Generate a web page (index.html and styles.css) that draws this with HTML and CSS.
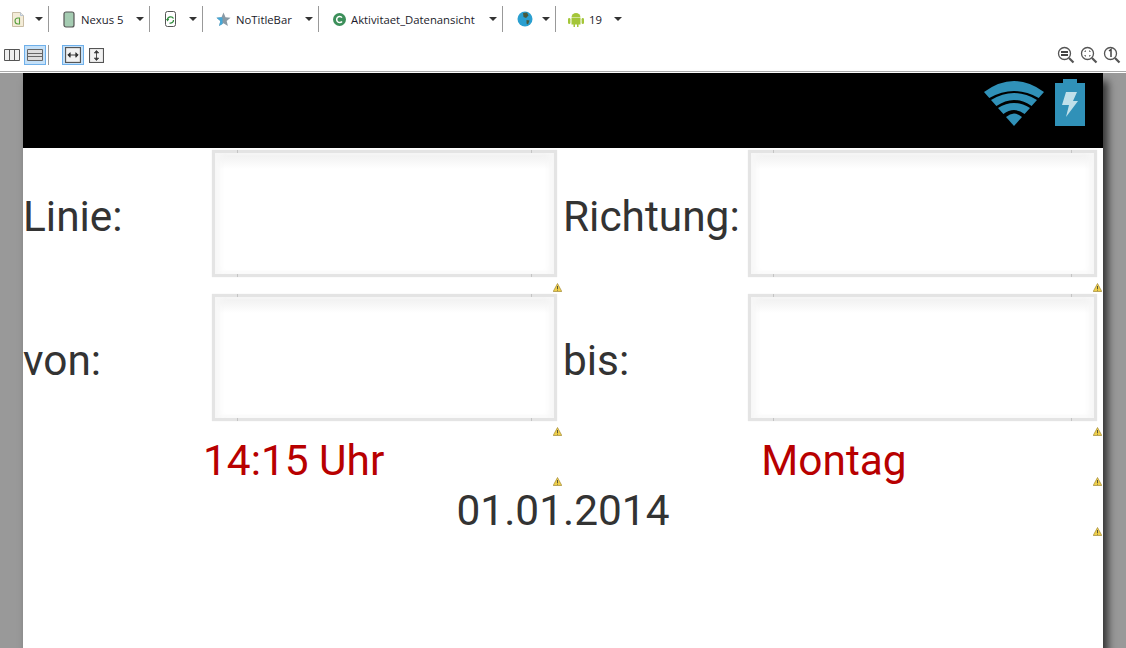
FILE: index.html
```html
<!DOCTYPE html>
<html>

<head>
  <title>Layout Vorschau</title>
  <link rel="stylesheet" href="styles.css">
</head>

<body>
  <svg class="defs">
    <defs>
      <symbol id="arrow" viewBox="0 0 8 4"><path d="M0 0h8L4 4z" fill="#333"/></symbol>
      <symbol id="warn" viewBox="0 0 9 9">
        <path d="M4.5 .5L8.800 8.500H.2z" fill="#f0d04a" stroke="#a08a3a" stroke-width=".7"/>
        <path d="M4.100 3h.8v3h-.8zM4.100 6.700h.8v.9h-.8z" fill="#333"/>
      </symbol>
      <symbol id="zoom" viewBox="0 0 18 18">
        <circle cx="7.500" cy="7.500" r="6" fill="#fff" stroke="#555" stroke-width="1.300"/>
        <path d="M12 12l4.500 4.500" stroke="#555" stroke-width="2.200"/>
      </symbol>
    </defs>
  </svg>

  <div class="toolbar">
    <div class="tool-row row-top">
      <div class="tool tool-file">
        <svg width="16" height="17" viewBox="0 0 16 17"><path d="M2.500 1.500h8l3 3v11h-11z" fill="#f4ecd8" stroke="#c9bda4"/><path d="M10.500 1.500v3h3" fill="#dfe8f2" stroke="#b9c4d0"/><path d="M8 7a3 3 0 1 0 0 6h1.500V7z" fill="none" stroke="#5aa040" stroke-width="1.100"/></svg>
        <svg class="arrow"><use href="#arrow"/></svg>
      </div>
      <div class="tool tool-device">
        <svg width="12" height="17" viewBox="0 0 12 17"><rect x="1" y="1" width="10" height="15" rx="2" fill="#a5ccb2" stroke="#555" stroke-width="1.200"/></svg>
        <span class="tool-text">Nexus 5</span>
        <svg class="arrow"><use href="#arrow"/></svg>
      </div>
      <div class="tool tool-rotate">
        <svg width="12" height="17" viewBox="0 0 12 17"><rect x=".5" y=".5" width="10" height="15" rx="2" fill="#fff" stroke="#555"/><path d="M2.500 9a3.200 3.200 0 0 1 6 -1.500M8.500 9a3 3 0 0 1 -4 3" fill="none" stroke="#2e8b3a" stroke-width="1.300"/><path d="M1 8h3.200L2.600 10.500z" fill="#2e8b3a"/></svg>
        <svg class="arrow"><use href="#arrow"/></svg>
      </div>
      <div class="tool tool-theme">
        <svg width="15" height="15" viewBox="0 0 15 15"><path d="M7.500 .5l2 4.800 5 .4-3.800 3.300 1.200 5-4.400-2.700-4.400 2.700 1.200-5L.5 5.700l5-.4z" fill="#8a9aa5"/><path d="M5.500 5.300L.5 5.700l3.800 3.300-1.200 5 3.400-2.100V6z" fill="#45a8d8"/></svg>
        <span class="tool-text">NoTitleBar</span>
        <svg class="arrow"><use href="#arrow"/></svg>
      </div>
      <div class="tool tool-activity">
        <svg width="13" height="13" viewBox="0 0 13 13"><circle cx="6.500" cy="6.500" r="6.500" fill="#3c8f5a"/><path d="M9 4.600a3 3 0 1 0 0 3.800" fill="none" stroke="#fff" stroke-width="1.500"/></svg>
        <span class="tool-text">Aktivitaet_Datenansicht</span>
        <svg class="arrow"><use href="#arrow"/></svg>
      </div>
      <div class="tool tool-globe">
        <svg width="16" height="16" viewBox="0 0 16 16"><circle cx="8" cy="8" r="7.500" fill="#2a9fd0"/><path d="M6 2l4-.5 1.500 3L9 7 6.500 6zM9.500 9l3 .5-1.500 4-1.500-1z" fill="#4a5a3c"/></svg>
        <svg class="arrow"><use href="#arrow"/></svg>
      </div>
      <div class="tool tool-api">
        <svg width="16" height="16" viewBox="0 0 16 16" fill="#a4c639"><path d="M3.500 6.500a4.500 4.500 0 0 1 9 0z"/><path d="M3.500 7h9v6.500h-2V16H9v-2.500H7V16H5.500v-2.500h-2z"/><rect x="0" y="7" width="2.400" height="6" rx="1.200"/><rect x="13.600" y="7" width="2.400" height="6" rx="1.200"/></svg>
        <span class="tool-text">19</span>
        <svg class="arrow"><use href="#arrow"/></svg>
      </div>
    </div>
    <div class="tool-row row-bottom">
      <div class="view-group">
        <button class="view-btn"><svg width="16" height="12" viewBox="0 0 16 12"><path d="M.5 .5h15v11H.5zM5.500 .5v11M10.500 .5v11" fill="#eee" stroke="#555"/></svg></button>
        <button class="view-btn active"><svg width="16" height="12" viewBox="0 0 16 12"><path d="M.5 .5h15v11H.5zM.5 4.500h15M.5 7.500h15" fill="#ddd" stroke="#666"/></svg></button>
      </div>
      <div class="view-group">
        <button class="view-btn active"><svg width="16" height="16" viewBox="0 0 14 14"><rect x=".5" y=".5" width="13" height="13" fill="#f2f2f2" stroke="#555"/><path d="M2.500 7h9M2.500 7l2-2v4zM11.500 7l-2-2v4z" fill="#333" stroke="#333" stroke-width=".8"/></svg></button>
        <button class="view-btn"><svg width="15" height="15" viewBox="0 0 14 14"><rect x=".5" y=".5" width="13" height="13" fill="#f2f2f2" stroke="#555"/><path d="M7 2.500v9M7 2.500l-2 2h4zM7 11.500l-2-2h4z" fill="#333" stroke="#333" stroke-width=".8"/></svg></button>
      </div>
      <div class="zoom-group">
        <div class="zoom-icon">
          <svg width="18" height="18"><use href="#zoom"/></svg>
          <span class="zoom-mark"></span>
        </div>
        <div class="zoom-icon">
          <svg width="18" height="18"><use href="#zoom"/><path d="M5 6V5h1M9 5h1v1M10 9v1H9M6 10H5V9" fill="none" stroke="#555"/></svg>
        </div>
        <div class="zoom-icon">
          <svg width="18" height="18"><use href="#zoom"/><path d="M6 5l2-1.500V11" fill="none" stroke="#444" stroke-width="1.500"/></svg>
        </div>
      </div>
    </div>
  </div>

  <div class="canvas">
    <div class="screen">
      <div class="status-bar">
        <svg class="wifi" width="60" height="45" viewBox="0 0 60 45">
          <path d="M0 11Q30 -11 60 11L54.700 17Q30 3 5.300 17z" fill="#3091b8"/>
          <path d="M7 19Q30 5 53 19L47.600 25Q30 13 12.400 25z" fill="#3091b8"/>
          <path d="M14 27Q30 17 46 27L40.600 33Q30 25 19.400 33z" fill="#3091b8"/>
          <path d="M22 36Q30 29 38 36L30 45z" fill="#3091b8"/>
        </svg>
        <svg class="battery" width="30" height="47" viewBox="0 0 30 47">
          <path d="M8 0h14v4h8v43H0V4h8z" fill="#3091b8"/>
          <path d="M11 13h11l-4 9h5L11 38l3-12H7z" fill="#c0e0ea"/>
        </svg>
      </div>

      <div class="form-grid">
        <div class="label">Linie:</div>
        <div class="field"></div>
        <div class="label">Richtung:</div>
        <div class="field"></div>
        <div class="label">von:</div>
        <div class="field"></div>
        <div class="label">bis:</div>
        <div class="field"></div>
      </div>

      <div class="time-row">
        <div class="red-text time-text">14:15 Uhr</div>
        <div class="red-text day-text">Montag</div>
      </div>
      <div class="date-text">01.01.2014</div>

      <svg class="warn w1"><use href="#warn"/></svg>
      <svg class="warn w2"><use href="#warn"/></svg>
      <svg class="warn w3"><use href="#warn"/></svg>
      <svg class="warn w4"><use href="#warn"/></svg>
      <svg class="warn w5"><use href="#warn"/></svg>
      <svg class="warn w6"><use href="#warn"/></svg>
      <svg class="warn w7"><use href="#warn"/></svg>
    </div>
  </div>
</body>

</html>
```

FILE: styles.css
```css
html,
body {
  margin: 0;
  height: 100%;
  overflow: hidden;
  background: #fff;
}

body {
  display: flex;
  flex-direction: column;
  font-family: "Roboto", "Liberation Sans", sans-serif;
}

.defs {
  position: absolute;
  width: 0;
  height: 0;
}

.toolbar {
  flex: none;
  box-sizing: border-box;
  border-bottom: 1px solid #aaa;
  height: 72px;
}

.tool-row {
  display: flex;
  align-items: center;
}

.row-top {
  height: 32px;
  padding-top: 3px;
  padding-left: 10px;
}

.row-bottom {
  height: 22px;
  margin-top: 9px;
  padding-left: 1px;
  padding-right: 5px;
}

.tool {
  display: flex;
  align-items: center;
  height: 26px;
  border-right: 1px solid #999;
  box-sizing: border-box;
  padding-right: 5px;
  margin-right: 12px;
}

.tool-text {
  font-family: "Open Sans", "Noto Sans", sans-serif;
  font-size: 11.300px;
  color: #1a1a2a;
  margin-left: 6px;
  white-space: nowrap;
}

.arrow {
  width: 8px;
  height: 4px;
  margin-left: auto;
}

.tool-file { width: 39px; }
.tool-device { width: 89px; padding-left: 2px; }
.tool-rotate { width: 41px; padding-left: 3px; }
.tool-theme { width: 104px; padding-left: 1px; }
.tool-activity { width: 172px; margin-right: 14px; padding-left: 2px; }
.tool-globe { width: 39px; margin-right: 12px; }
.tool-api { width: 59px; border-right: none; }

.tool-theme .tool-text,
.tool-activity .tool-text,
.tool-api .tool-text {
  margin-left: 5px;
}

.view-group {
  display: flex;
  align-items: center;
  gap: 1px;
  padding-right: 2px;
  margin-right: 13px;
  border-right: 1px solid #999;
}

.view-group + .view-group {
  border-right: none;
}

.view-btn {
  width: 22px;
  height: 20px;
  padding: 0;
  border: 1px solid transparent;
  background: none;
  display: flex;
  align-items: center;
  justify-content: center;
}

.view-btn.active {
  background: #c4e0f8;
  border-color: #6fb0ea;
}

.zoom-group {
  display: flex;
  gap: 5px;
  margin-left: auto;
}

.zoom-icon {
  position: relative;
  width: 18px;
  height: 18px;
}

.zoom-mark {
  position: absolute;
  left: 4px;
  top: 5px;
  width: 7px;
  height: 1px;
  border-top: 2px solid #444;
  border-bottom: 2px solid #444;
}

.canvas {
  flex: 1;
  background: #999;
  padding-left: 23px;
  padding-right: 23px;
  margin-top: 1px;
  min-height: 0;
}

.screen {
  position: relative;
  height: 100%;
  background: #fff;
  box-shadow: 5px 8px 8px #333;
}

.status-bar {
  height: 75px;
  background: #000;
  display: flex;
  justify-content: flex-end;
  padding-right: 18px;
  padding-top: 8px;
  box-sizing: border-box;
  gap: 11px;
}

.battery { margin-top: -2px; }

.form-grid {
  display: grid;
  grid-template-columns: 189px 345px 191px 349px;
  grid-template-rows: 127px 127px;
  row-gap: 17px;
  padding-top: 2px;
}

.label {
  font-size: 42.400px;
  color: #333;
  align-self: center;
  line-height: 52px;
  padding-top: 6px;
}

.label:nth-child(3),
.label:nth-child(7) {
  margin-left: 6px;
  white-space: nowrap;
}

.field {
  position: relative;
  box-sizing: border-box;
  border: 3px solid #e4e4e4;
  background: linear-gradient(#efefef, #fff 16px);
  box-shadow: inset 5px 0 6px #f7f7f7, inset -5px 0 6px #f7f7f7, 0 0 1px #e8e8e8;
}

/* marcas do nine-patch nas bordas */
.field::before {
  content: "";
  position: absolute;
  left: 22px;
  right: 22px;
  top: -3px;
  bottom: -3px;
  background:
    linear-gradient(#c4c4c4, #c4c4c4) left top / 1px 3px no-repeat,
    linear-gradient(#c4c4c4, #c4c4c4) right top / 1px 3px no-repeat,
    linear-gradient(#c4c4c4, #c4c4c4) left bottom / 1px 3px no-repeat,
    linear-gradient(#c4c4c4, #c4c4c4) right bottom / 1px 3px no-repeat;
}

.time-row {
  display: flex;
  height: 50px;
  margin-top: 15px;
}

.red-text {
  font-size: 42.400px;
  color: #b80000;
  line-height: 50px;
}

.time-text { margin-left: 180px; }
.day-text { margin-left: 377px; }

.date-text {
  font-size: 42.400px;
  line-height: 50px;
  color: #333;
  text-align: center;
}

.warn {
  position: absolute;
  width: 9px;
  height: 9px;
}

.w1 { left: 530px; top: 210px; }
.w2 { left: 1070px; top: 210px; }
.w3 { left: 530px; top: 354px; }
.w4 { left: 1070px; top: 354px; }
.w5 { left: 530px; top: 404px; }
.w6 { left: 1070px; top: 404px; }
.w7 { left: 1070px; top: 454px; }
```
